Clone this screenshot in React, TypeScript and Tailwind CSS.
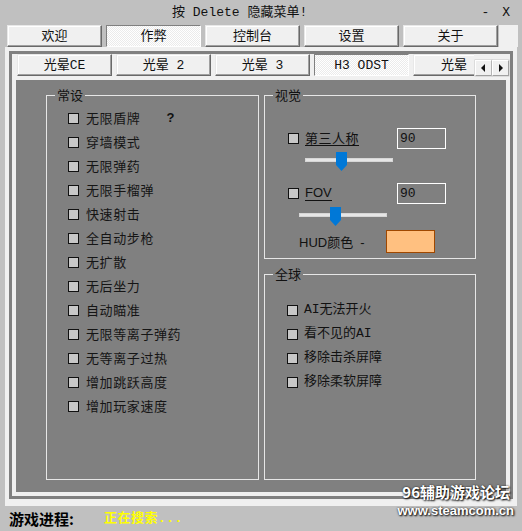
import React from "react";

const MONO = "[font-family:'Liberation_Mono','Noto_Sans_CJK_SC',monospace]";
const SANS = "[font-family:'Noto_Sans_CJK_SC','Liberation_Sans',sans-serif]";
const ARIAL = "[font-family:'Liberation_Sans','Noto_Sans_CJK_SC',sans-serif]";

function Tab({ label, active }: { label: string; active?: boolean }) {
  if (active) {
    return (
      <div className="w-[95px] h-[22px] shrink-0 flex items-center justify-center border border-t-[#808080] border-l-[#808080] border-b-white border-r-white bg-[conic-gradient(#ebebeb_25%,#ffffff_0_50%,#ebebeb_0_75%,#ffffff_0)] bg-[length:2px_2px] text-[13px] leading-none">
        {label}
      </div>
    );
  }
  return (
    <div className="w-[95px] h-[22px] shrink-0 flex items-center justify-center border border-t-[#e8e8e8] border-l-[#e8e8e8] border-b-[#696969] border-r-[#696969] shadow-[inset_-1px_-1px_0_#a0a0a0,inset_1px_1px_0_#ffffff] bg-[#f0f0f0] text-[13px] leading-none">
      {label}
    </div>
  );
}

function Box() {
  return <span className="w-[11px] h-[11px] shrink-0 border border-[#111] bg-[#c8c8c8]" />;
}

function Slider() {
  return (
    <div className="relative w-[88px] h-[19px]">
      <div className="absolute left-0 right-0 top-[6px] h-[4px] bg-[#e6e6e6] border border-[#d6d6d6]" />
      <svg className="absolute left-[31px] top-0" width="11" height="19" viewBox="0 0 11 19">
        <path d="M0 0H11V13L5.5 19L0 13Z" fill="#0078d7" />
      </svg>
    </div>
  );
}

function Group({ title, className, children }: { title: string; className: string; children: React.ReactNode }) {
  return (
    <div className={`relative border border-[#e6e6e6] ${className}`}>
      <span className={`absolute -top-[9px] left-[8px] px-[2px] bg-[#808080] text-[13px] leading-[16px] text-[#111] ${SANS}`}>
        {title}
      </span>
      {children}
    </div>
  );
}

const general = [
  "无限盾牌",
  "穿墙模式",
  "无限弹药",
  "无限手榴弹",
  "快速射击",
  "全自动步枪",
  "无扩散",
  "无后坐力",
  "自动瞄准",
  "无限等离子弹药",
  "无等离子过热",
  "增加跳跃高度",
  "增加玩家速度",
];

const globalOpts = ["AI无法开火", "看不见的AI", "移除击杀屏障", "移除柔软屏障"];

export default function App() {
  return (
    <div className={`w-[522px] h-[531px] bg-[#c0c0c0] flex flex-col overflow-hidden relative text-[#111] ${MONO}`}>
      {/* title bar */}
      <div className="h-[25px] flex items-center text-[13px] leading-none">
        <span className="ml-[172px]">按 Delete 隐藏菜单!</span>
        <span className="ml-auto">-</span>
        <span className="ml-[13px] mr-[12px]">X</span>
      </div>

      {/* top tabs */}
      <div className="h-[22px] flex pl-[7px] gap-[4px]">
        <Tab label="欢迎" />
        <Tab label="作弊" active />
        <Tab label="控制台" />
        <Tab label="设置" />
        <Tab label="关于" />
        <div className="w-[19px] -ml-[3px] bg-[#f0f0f0]" />
      </div>

      {/* main panel */}
      <div className="mx-[5px] bg-[#f0f0f0] p-[4px] pb-[7px]">
        <div className="border-[3px] border-[#808080] px-[4px] pb-[4px] flex flex-col">
          {/* inner tabs */}
          <div className="h-[22px] flex pl-[1px] gap-[4px]">
            <Tab label="光晕CE" />
            <Tab label="光晕 2" />
            <Tab label="光晕 3" />
            <Tab label="H3 ODST" active />
            <div className="w-[61px] overflow-hidden shrink-0">
              <div className="w-[61px] h-[22px] flex items-center pl-[27px] border border-t-[#e8e8e8] border-l-[#e8e8e8] border-b-[#696969] border-r-0 shadow-[inset_0_-1px_0_#a0a0a0,inset_1px_1px_0_#ffffff] bg-[#f0f0f0] text-[13px] leading-none">
                光晕
              </div>
            </div>
            <div className="flex self-end -ml-[3px]">
              {[0, 1].map((i) => (
                <div
                  key={i}
                  className="w-[17px] h-[16px] flex items-center justify-center bg-[#f0f0f0] border border-t-white border-l-white border-b-[#a0a0a0] border-r-[#a0a0a0] shadow-[0_0_0_0.5px_#c8c8c8]"
                >
                  <svg width="5" height="8" viewBox="0 0 5 8">
                    {i === 0 ? <path d="M4 0V8L0 4Z" fill="#111" /> : <path d="M1 0V8L5 4Z" fill="#111" />}
                  </svg>
                </div>
              ))}
            </div>
          </div>

          {/* content */}
          <div className="mt-[4px] h-[412px] bg-[#808080] flex pt-[15px] pl-[30px]">
            <Group title="常设" className="w-[213px] h-[385px] shrink-0">
              <div className="pt-[10px] pl-[21px] flex flex-col">
                {general.map((g, i) => (
                  <div key={g} className="h-[24px] flex items-center">
                    <Box />
                    <span className={`ml-[7px] text-[13px] leading-[16px] tracking-[0.6px] text-[#151515] ${SANS}`}>{g}</span>
                    {i === 0 && <span className={`ml-[26px] text-[13px] font-bold leading-[16px] ${ARIAL}`}>?</span>}
                  </div>
                ))}
              </div>
            </Group>

            <div className="ml-[5px] w-[212px] flex flex-col shrink-0">
              <Group title="视觉" className="h-[164px]">
                <div className="pt-[32px] flex flex-col">
                  <div className="h-[21px] flex items-center pl-[23px] pr-[29px]">
                    <Box />
                    <span className={`ml-[6px] text-[13px] leading-[14px] tracking-[0.5px] border-b border-[#111] ${SANS}`}>第三人称</span>
                    <div className="ml-auto w-[49px] h-[21px] border border-white flex items-center pl-[2px] text-[13px]">90</div>
                  </div>
                  <div className="mt-[3px] pl-[40px]">
                    <Slider />
                  </div>
                  <div className="mt-[12px] h-[21px] flex items-center pl-[23px] pr-[29px]">
                    <Box />
                    <span className={`ml-[6px] text-[13px] leading-[14px] border-b border-[#111] ${ARIAL}`}>FOV</span>
                    <div className="ml-auto w-[49px] h-[21px] border border-white flex items-center pl-[2px] text-[13px]">90</div>
                  </div>
                  <div className="mt-[3px] pl-[34px]">
                    <Slider />
                  </div>
                  <div className="mt-[4px] h-[23px] flex items-center pl-[34px]">
                    <span className={`w-[87px] text-[13px] leading-none ${ARIAL}`}>
                      HUD<span className={SANS}>颜色</span>
                      <span className="ml-[7px]">-</span>
                    </span>
                    <div className="w-[49px] h-[23px] bg-[#ffc080] border border-[#a04800]" />
                  </div>
                </div>
              </Group>

              <Group title="全球" className="mt-[15px] h-[206px]">
                <div className="pt-[23px] pl-[22px] flex flex-col">
                  {globalOpts.map((g) => (
                    <div key={g} className="h-[24px] flex items-center">
                      <Box />
                      <span className="ml-[6px] text-[13px] leading-[16px]">{g}</span>
                    </div>
                  ))}
                </div>
              </Group>
            </div>
          </div>
        </div>
      </div>

      {/* status bar */}
      <div className="flex-1 flex items-center">
        <span className={`ml-[9px] text-[15px] font-bold leading-none text-black ${SANS}`}>游戏进程:</span>
        <span className="ml-[30px] text-[13px] font-bold leading-none text-[#ffff00] tracking-[0.5px]">正在搜索...</span>
      </div>

      {/* watermark */}
      <div className={`absolute right-[8px] bottom-[14px] flex flex-col items-end text-white font-bold [text-shadow:1px_1px_2px_#000,0_0_2px_#333] ${SANS}`}>
        <span className="text-[15px] leading-[16px] mr-[4px]">96辅助游戏论坛</span>
        <span className={`mt-[4px] text-[13px] leading-[13px] ${ARIAL}`}>www.steamcom.cn</span>
      </div>
    </div>
  );
}
